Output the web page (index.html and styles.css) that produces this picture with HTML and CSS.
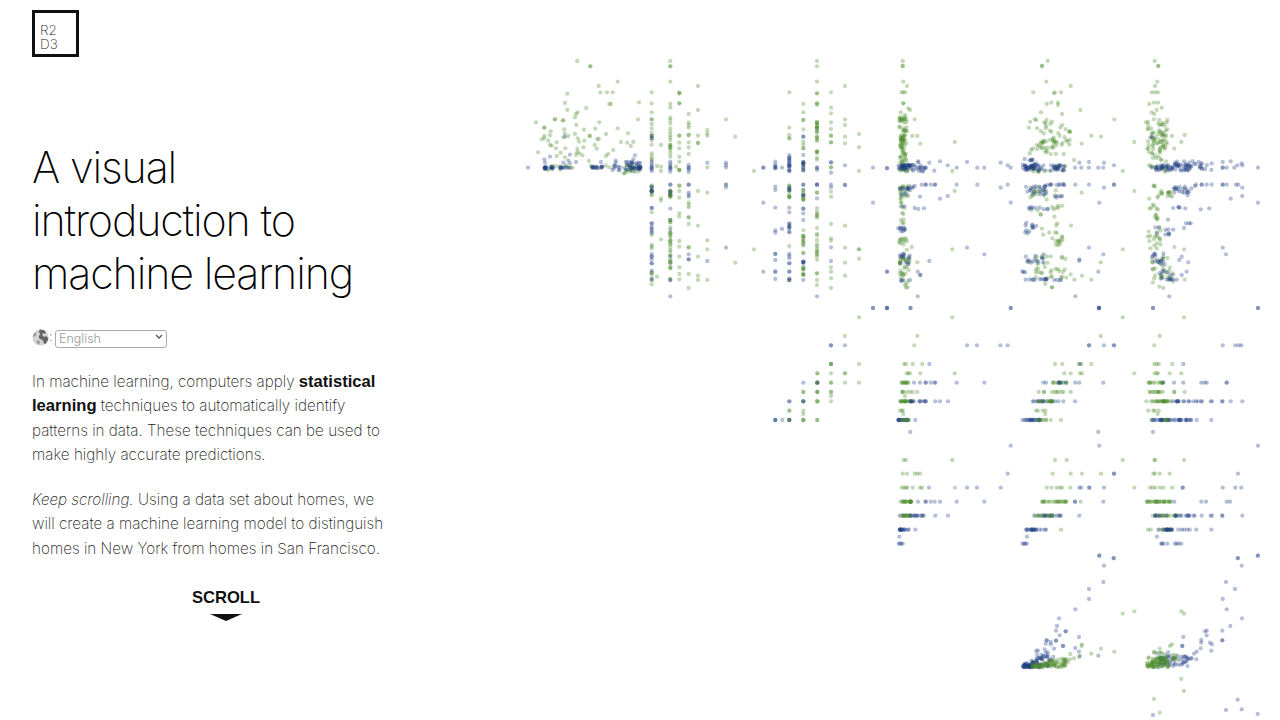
FILE: index.html
```html
<!DOCTYPE html>
<html lang="en">
<head>
    <meta charset="UTF-8">
    <meta name="viewport" content="width=device-width, initial-scale=1.0">
    <title>A visual introduction to machine learning</title>
    <link rel="stylesheet" href="styles.css">
</head>
<body>
    <div class="page">
        <div class="intro">
            <a class="logo" href="#">R2<br>D3</a>
            <h1>A visual<br>introduction to<br>machine learning</h1>
            <div class="lang">
                <svg class="globe" viewBox="0 0 16 16" width="17" height="17">
                    <circle cx="8" cy="8" r="7.6" fill="#d4d4d4"/>
                    <path d="M7 .6C9 .3 11.5 1 13 2.6L12.4 4.4 10.4 4 9.6 5.6 11 7.2 13.4 6.8 15.4 8.4C15.2 10.6 14 12.6 12.4 14L11 13.4 10.4 10.8 8.4 9.6 6.6 8.8 6.4 6.6 8 5 6.6 3.2Z" fill="#666"/>
                    <path d="M1.6 4.6 3.4 3.4 4.2 5.2 2.6 7.2 1 7Z" fill="#999"/>
                    <path d="M5 10.4 7.4 11.4 7 14 5.6 14.6 4.6 12.4Z" fill="#999"/>
                </svg>
                <span class="colon">:</span>
                <div class="select-wrap">
                    <select class="lang-select">
                        <option>English</option>
                    </select>
                    <svg class="chevron" viewBox="0 0 8 5" width="8" height="5">
                        <path d="M1 1 4 4 7 1" fill="none" stroke="#555" stroke-width="1.3"/>
                    </svg>
                </div>
            </div>
            <p>In machine learning, computers apply <b>statistical learning</b> techniques to automatically identify patterns in data. These techniques can be used to make highly accurate predictions.</p>
            <p><em>Keep scrolling.</em> Using a data set about homes, we will create a machine learning model to distinguish homes in New York from homes in San Francisco.</p>
            <div class="scroll">
                <span>SCROLL</span>
                <div class="arrow"></div>
            </div>
        </div>
        <svg id="matrix" class="matrix" viewBox="520 0 760 720"></svg>
    </div>
    <script src="script.js"></script>
</body>
</html>
```

FILE: styles.css
```css
html, body {
    margin: 0;
    padding: 0;
    height: 100%;
    background: #fff;
}
body {
    font-family: Inter, 'Liberation Sans', sans-serif;
    font-weight: 200;
    color: #333;
    overflow: hidden;
}
.page {
    display: flex;
    height: 720px;
}
.intro {
    flex: none;
    width: 354px;
    margin-right: 134px;
    padding: 10px 0 0 32px;
}
.logo {
    display: block;
    width: 36px;
    height: 30px;
    border: 3px solid #111;
    padding: 11px 0 0 5px;
    font-size: 13.5px;
    line-height: 13.5px;
    color: #222;
    text-decoration: none;
}
h1 {
    font-size: 43px;
    font-weight: 200;
    line-height: 53px;
    letter-spacing: -1.15px;
    color: #000;
    margin: 84px 0 27px;
}
.lang {
    display: flex;
    align-items: center;
    height: 18px;
    margin-bottom: 25px;
}
.globe {
    flex: none;
    margin-top: 2px;
}
.colon {
    width: 6px;
    font-size: 13px;
    font-weight: 300;
    color: #666;
}
.select-wrap {
    position: relative;
    width: 112px;
    height: 18px;
}
.lang-select {
    appearance: none;
    width: 100%;
    height: 100%;
    border: 1px solid #aaa;
    border-radius: 3px;
    background: #fff;
    padding: 0 0 0 3px;
    font-family: Inter, 'Liberation Sans', sans-serif;
    font-weight: 300;
    font-size: 12.5px;
    color: #999;
}
.chevron {
    position: absolute;
    right: 4px;
    top: 7px;
}
p {
    font-size: 15.25px;
    line-height: 24.3px;
    color: #222;
    margin: 0 0 21px;
}
b {
    font-family: 'Liberation Sans', sans-serif;
    font-weight: 700;
    font-size: 16.6px;
    line-height: 20px;
    color: #111;
}
.scroll {
    display: flex;
    flex-direction: column;
    align-items: center;
    width: 388px;
    margin-top: 27px;
}
.scroll span {
    font-family: 'Liberation Sans', sans-serif;
    font-weight: 700;
    font-size: 16.6px;
    line-height: 20px;
    color: #111;
}
.arrow {
    width: 0;
    height: 0;
    margin-top: 6px;
    border-left: 16px solid transparent;
    border-right: 16px solid transparent;
    border-top: 7px solid #111;
}
.matrix {
    display: block;
    flex: none;
    width: 760px;
    height: 720px;
}
```

FILE: script.js
```js
// scatterplot matrix, coordinates are written relative to a panel origin at 3x scale
const svg = document.getElementById('matrix');
const NS = 'http://www.w3.org/2000/svg';
const GREEN = '#4c8c2b';
const BLUE = '#1f3d84';

let seed = 42;
function rnd() {
    seed = (seed * 16807) % 2147483647;
    return seed / 2147483647;
}

function dot(color, x, y) {
    const c = document.createElementNS(NS, 'circle');
    c.setAttribute('cx', x.toFixed(1));
    c.setAttribute('cy', y.toFixed(1));
    c.setAttribute('r', 2.15);
    c.setAttribute('fill', color);
    c.setAttribute('fill-opacity', 0.33);
    svg.appendChild(c);
}

let ox = 0, oy = 0;
function origin(x, y) { ox = x; oy = y; }

// flat list of x,y pairs
function pts(color, list) {
    for (let i = 0; i < list.length; i += 2) {
        dot(color, ox + list[i] / 3, oy + list[i + 1] / 3);
    }
}
// one column, many y values
function col(color, x, ys) {
    ys.forEach(y => dot(color, ox + x / 3, oy + y / 3));
}
// one row, many x values
function row(color, y, xs) {
    xs.forEach(x => dot(color, ox + x / 3, oy + y / 3));
}
// random fill of a box
function box(color, x0, x1, y0, y1, n) {
    for (let i = 0; i < n; i++) {
        dot(color, ox + (x0 + rnd() * (x1 - x0)) / 3, oy + (y0 + rnd() * (y1 - y0)) / 3);
    }
}
// random fill of a thin wedge that widens to the right, for the bottom row
function wedge(color, x0, x1, yBase, rise, n) {
    for (let i = 0; i < n; i++) {
        const t = rnd();
        dot(color, ox + (x0 + t * (x1 - x0)) / 3, oy + (yBase - rnd() * rise * (0.25 + t)) / 3);
    }
}
// random column band
function vband(color, x, y0, y1, n) { box(color, x, x, y0, y1, n); }
// random row band
function hband(color, y, x0, x1, n) { box(color, x0, x1, y, y, n); }

/* ---- top row ---- */
origin(520, 50);

// panel 1
pts(GREEN, [172,33, 211,49, 211,49, 236,108, 293,95, 241,127, 261,127, 278,127, 142,131, 135,159, 268,162, 273,162, 357,157,
    199,174, 173,187, 168,192, 142,180, 165,202, 48,217, 105,208, 105,208, 129,211, 129,211, 73,233, 73,233, 92,244, 133,238, 169,225,
    192,239, 226,236, 238,217, 293,235, 354,208, 65,268, 73,258, 73,265, 90,256, 110,277, 145,258, 165,252, 173,265, 177,275,
    193,272, 190,292, 209,258, 209,258, 232,267, 236,267, 258,252, 303,276, 322,278, 324,250, 340,276, 332,288, 280,300, 265,312, 258,318,
    230,296, 224,285, 90,285, 95,287, 108,295, 122,308, 136,295, 54,307, 110,318, 135,322, 172,297, 172,307, 168,315, 178,310, 187,316, 207,333,
    85,272, 130,262, 134,250]);
box(GREEN, 75, 160, 345, 362, 12);
box(GREEN, 310, 360, 345, 370, 22);
box(GREEN, 210, 300, 345, 362, 5);
pts(BLUE, [24,353, 73,328, 75,338, 90,320, 150,314, 130,338, 145,332, 150,340, 168,336, 243,336, 287,332, 287,338, 318,336, 345,316, 340,328, 135,260]);
box(BLUE, 68, 78, 349, 358, 9);
box(BLUE, 92, 102, 349, 358, 7);
hband(BLUE, 353, 118, 155, 10);
box(BLUE, 212, 232, 349, 357, 10);
box(BLUE, 240, 255, 346, 358, 5);
box(BLUE, 272, 300, 346, 362, 8);
box(BLUE, 310, 362, 335, 365, 28);
box(BLUE, 352, 362, 346, 358, 8);

// panel 2
col(GREEN, 395, [127,160,187,208,208,222,235,248,258,258,264,270,284,310,318,326,330]);
col(BLUE, 395, [335,342,348,353,353,358,363,258,265]);
vband(GREEN, 395, 405, 440, 9);
vband(BLUE, 395, 405, 425, 5);
col(BLUE, 395, [474,474,520,520,530,535,540,545,550,612,620,620,628,640,640,662,668,685,690]);
col(GREEN, 395, [487,555,585,590,595,668,674,690,703]);
col(GREEN, 451, [33,49,49,95,162,173,203,210,220,235,245,255,262,270,285,285,290,290,295,300,310,320]);
col(BLUE, 451, [335,342,348,353,353,358,365,404,404,476,510,540,620,640,690,690,739]);
vband(BLUE, 451, 415, 440, 7);
vband(GREEN, 451, 410, 450, 6);
vband(GREEN, 451, 490, 700, 28);
col(GREEN, 478, [127,130,130,160,160,257,257,278,295,320,335,360,360,360,407,407,423,443,490,500,573,590,620,652,672,688]);
col(GREEN, 506, [192,218,225,233,255,255,277,292,312,458,465,472,502,502,522,592,592,672,714]);
col(BLUE, 506, [345,353,353,358,366,404,404,428,435,440,613,628,628]);
col(GREEN, 534, [108,180,257,279,279,423,527,620,677,690]);
col(GREEN, 562, [240,250,257,352,428,571,598,690]);
col(BLUE, 562, [338,633]);
col(GREEN, 618, [208,404]);
col(BLUE, 618, [338,345,352,404,412,593]);
col(GREEN, 646, [260,638]);
col(GREEN, 702, [363,598]);
pts(GREEN, [423,285, 411,348, 423,350, 423,363, 423,445, 423,452, 423,568, 411,680, 468,350]);

// panel 3
col(BLUE, 730, [353,353,458,665]);
col(BLUE, 766, [335,345,350,350,355,355,410,420,473,541,548,612,612,630,665,665,687]);
pts(BLUE, [786,353, 786,537]);
col(GREEN, 808, [127,233,255,265,265,588,690]);
vband(BLUE, 808, 315, 365, 16);
col(BLUE, 808, [473,487,612,618,625,640,640,665,665,685,690,690]);
vband(GREEN, 808, 405, 450, 10);
vband(BLUE, 808, 405, 430, 4);
vband(BLUE, 808, 520, 550, 8);
col(GREEN, 850, [162,187,210,210,238,275,285,295,295,345,360]);
col(BLUE, 850, [260,260,315,404,404,476,476,490,510,690]);
vband(BLUE, 850, 335, 365, 10);
vband(BLUE, 850, 415, 440, 5);
vband(GREEN, 850, 415, 450, 6);
vband(GREEN, 850, 530, 620, 13);
vband(BLUE, 850, 620, 640, 5);
vband(GREEN, 850, 650, 680, 9);
col(GREEN, 891, [33,49,95,130,130,160,160,165,670,670,690,705,428,428]);
vband(GREEN, 891, 205, 345, 24);
col(BLUE, 891, [353,353,360,404,404,404,445,739]);
vband(GREEN, 891, 470, 505, 6);
vband(GREEN, 891, 530, 630, 13);
col(GREEN, 933, [127,173,190,217,237,257,257,277,277,352,352,425,440,522,565,572,652,665,685,714]);
col(BLUE, 933, [337,337,368,404,412,592,633]);
col(GREEN, 975, [108,208,225,260,280,527,593,638,677]);
col(BLUE, 975, [346,405,405]);
col(GREEN, 1017, [252,292,363,598,598,626]);
col(BLUE, 1059, [353,458,774]);
col(BLUE, 1101, [355,665,774]);

origin(880, 50);

// panel 4
pts(GREEN, [68,33, 68,48, 68,48, 70,95, 81,108, 65,127, 76,127, 70,127, 70,160, 70,160, 85,175, 90,180, 62,187, 75,195, 104,208, 224,276, 121,281, 217,363, 224,423, 217,598, 65,210, 65,210, 97,258, 112,258, 95,591, 112,637]);
box(GREEN, 58, 80, 200, 330, 50);
box(GREEN, 60, 75, 250, 300, 18);
box(GREEN, 55, 90, 330, 366, 22);
box(GREEN, 58, 90, 405, 440, 18);
box(GREEN, 62, 74, 440, 520, 12);
box(GREEN, 58, 82, 560, 600, 12);
box(GREEN, 58, 92, 620, 695, 30);
box(GREEN, 72, 84, 700, 716, 4);
box(BLUE, 54, 98, 344, 360, 32);
box(BLUE, 98, 140, 334, 366, 14);
hband(BLUE, 353, 118, 140, 5);
pts(BLUE, [21,354, 180,334, 203,346, 230,353, 261,336, 292,353, 313,353, 362,338, 383,346, 392,353, 163,362, 148,338, 125,404, 137,404, 137,404, 152,404, 165,404, 165,404, 104,408, 230,404, 292,404, 362,413, 383,404, 180,446, 203,438, 392,458, 120,440, 104,474, 115,477, 132,475, 148,633, 261,593, 313,613, 21,665, 113,665, 121,675, 121,675, 90,690, 113,739, 21,774, 92,774]);
box(BLUE, 60, 100, 410, 435, 14);
box(BLUE, 55, 75, 530, 552, 10);
box(BLUE, 58, 90, 610, 642, 14);
box(BLUE, 62, 72, 688, 692, 3);
box(BLUE, 64, 76, 465, 480, 2);

// panel 5
pts(GREEN, [503,33, 486,48, 486,48, 499,95, 572,108, 460,127, 522,130, 524,127, 543,127, 534,158, 534,165, 514,158, 500,162, 601,180, 483,187, 546,192, 464,208, 469,210, 500,210, 516,215, 703,208, 447,233, 634,257, 663,260, 763,276, 605,281, 582,330, 728,363, 605,428, 763,423, 573,527, 728,598, 662,637, 634,689, 606,677, 583,689, 572,673, 516,712, 516,712, 496,702]);
box(GREEN, 445, 570, 215, 320, 48);
box(GREEN, 460, 530, 270, 300, 14);
box(GREEN, 445, 560, 345, 368, 14);
box(GREEN, 450, 500, 410, 450, 14);
box(GREEN, 515, 550, 420, 520, 10);
box(GREEN, 450, 490, 475, 495, 4);
box(GREEN, 485, 550, 520, 600, 18);
box(GREEN, 450, 560, 615, 690, 34);
pts(BLUE, [585,353, 598,338, 604,353, 627,336, 627,353, 655,353, 670,353, 672,338, 702,346, 586,404, 627,404, 672,413, 702,404, 702,404, 658,458, 627,593, 670,613, 598,628, 598,633, 655,665, 586,739, 657,774, 657,774, 392,774]);
box(BLUE, 428, 555, 345, 362, 48);
box(BLUE, 428, 470, 325, 345, 10);
box(BLUE, 428, 470, 346, 356, 14);
box(BLUE, 495, 560, 402, 406, 10);
box(BLUE, 436, 500, 408, 436, 22);
box(BLUE, 520, 550, 435, 445, 5);
box(BLUE, 436, 510, 472, 478, 9);
box(BLUE, 432, 470, 518, 550, 12);
box(BLUE, 434, 495, 610, 642, 14);
box(BLUE, 426, 440, 663, 667, 3);
box(BLUE, 426, 500, 686, 690, 12);
box(BLUE, 520, 550, 688, 692, 4);

// panel 6
pts(GREEN, [824,33, 835,48, 835,48, 832,95, 825,108, 815,127, 825,127, 834,127, 808,162, 822,158, 834,158, 845,173, 830,180, 815,187, 823,192, 798,217, 822,208, 838,210, 862,210, 876,258, 914,255, 904,276, 883,296, 838,710, 850,714, 883,591, 912,598, 914,689]);
box(GREEN, 802, 865, 215, 340, 58);
box(GREEN, 815, 850, 245, 295, 14);
box(GREEN, 805, 870, 345, 368, 14);
box(GREEN, 820, 830, 405, 410, 3);
box(GREEN, 830, 880, 415, 440, 13);
box(GREEN, 805, 835, 440, 515, 14);
box(GREEN, 800, 845, 520, 600, 18);
box(GREEN, 810, 880, 620, 700, 30);
pts(BLUE, [1134,353, 1028,336, 1052,334, 1085,340, 1087,346, 1072,346, 1063,353, 1028,353, 1028,353, 1040,353, 965,404, 965,404, 980,404, 995,404, 1028,404, 1028,404, 1040,404, 1068,404, 1075,404, 1087,413, 1087,438, 1052,446, 1134,458, 962,478, 988,475, 945,408, 948,404, 1028,593, 1038,613, 868,739, 819,774, 1134,774, 927,520, 932,520, 918,520, 912,534, 864,509, 916,475, 905,620, 898,630, 925,637, 920,665, 905,675, 890,689, 880,689]);
box(BLUE, 815, 935, 345, 362, 55);
box(BLUE, 880, 960, 332, 345, 12);
box(BLUE, 950, 995, 335, 362, 12);
box(BLUE, 880, 935, 410, 436, 20);
box(BLUE, 875, 900, 470, 478, 4);
box(BLUE, 825, 880, 530, 555, 10);
box(BLUE, 815, 860, 610, 645, 16);
box(BLUE, 830, 880, 660, 690, 10);
pts(BLUE, [860,689, 866,689, 870,689, 815,260, 815,262]);

/* ---- second block ---- */
origin(760, 300);

pts(BLUE, [339,24, 381,24, 451,24, 752,24, 1017,24, 1017,24, 1179,24, 1494,24]);
pts(GREEN, [297,52, 577,52, 1088,52, 1272,52, 255,108, 472,108, 1022,108, 1199,108, 463,136, 1183,136]);
pts(BLUE, [213,136, 213,136, 255,136, 621,136, 651,136, 721,136, 743,136, 987,136, 987,136, 1032,136, 1062,136, 1062,136, 1388,136, 1426,136, 1436,136, 1444,136]);

// triangle panel
pts(BLUE, [46,360, 46,360, 46,360, 67,360, 88,360, 88,360, 88,360, 88,304, 88,304, 130,304, 130,304, 130,304, 130,248, 172,248, 172,248, 172,248, 213,192]);
pts(GREEN, [88,360, 130,360, 130,360, 130,360, 172,360, 172,360, 88,332, 88,332, 130,332, 130,342, 130,304, 172,304, 172,304, 172,304, 213,304, 213,288, 130,276, 130,276, 172,276, 172,276, 172,276, 213,276, 213,276, 172,248, 172,248, 213,248, 213,248, 255,248, 297,248, 172,220, 172,220, 213,220, 255,220, 255,220, 213,192, 213,192, 297,192]);

// rows of the first column
row(GREEN, 192, [432,438,458,487]);
row(BLUE, 192, [508]);
row(GREEN, 220, [440,445,450,481,584]);
hband(GREEN, 248, 424, 446, 10);
row(BLUE, 248, [462,480,497,497,512,524,526,590,673]);
row(GREEN, 276, [426,428,430,440,450,458,472]);
hband(GREEN, 304, 420, 455, 18);
hband(BLUE, 304, 450, 500, 12);
row(BLUE, 304, [526,540,564]);
pts(GREEN, [435,288, 420,332, 426,332, 428,332, 430,342]);
hband(BLUE, 360, 414, 448, 16);
hband(GREEN, 360, 420, 448, 6);
pts(BLUE, [466,360, 451,396]);

// rows of the second column
row(GREEN, 192, [885,907]);
pts(GREEN, [956,192, 964,192, 994,192, 913,220, 932,220, 960,220, 966,220, 1123,220]);
pts(BLUE, [960,192]);
row(BLUE, 248, [850,858,946,958,1030]);
hband(GREEN, 248, 870, 925, 10);
hband(BLUE, 248, 885, 920, 5);
row(GREEN, 276, [836,852,852,876,884,890,894,904,910,932]);
hband(BLUE, 304, 815, 885, 14);
hband(GREEN, 304, 825, 885, 12);
row(BLUE, 304, [895,910,945]);
row(GREEN, 332, [828,834,848,856]);
pts(GREEN, [856,342]);
hband(BLUE, 360, 786, 840, 20);
hband(GREEN, 360, 815, 860, 6);
pts(GREEN, [872,360, 903,360]);
pts(BLUE, [1015,396]);

// rows of the third column
row(GREEN, 192, [1183,1190,1196,1237]);
pts(BLUE, [1270,192]);
row(GREEN, 220, [1184,1190,1194,1229,1264]);
hband(GREEN, 248, 1163, 1212, 12);
row(BLUE, 248, [1210,1242,1270,1324,1334,1340,1400,1400]);
hband(GREEN, 276, 1168, 1210, 10);
pts(GREEN, [1243,276, 1243,276, 1274,276]);
pts(GREEN, [1159,304]);
hband(GREEN, 304, 1172, 1235, 22);
hband(BLUE, 304, 1235, 1330, 16);
row(BLUE, 304, [1352,1356,1387,1387,1412,1447]);
row(GREEN, 332, [1165,1180,1184,1196]);
pts(GREEN, [1193,342]);
hband(GREEN, 360, 1170, 1240, 12);
hband(BLUE, 360, 1172, 1295, 30);
row(BLUE, 360, [1310,1354]);
pts(BLUE, [1179,396]);

// third row of the block
pts(BLUE, [752,437, 1018,437, 1494,437]);
row(GREEN, 480, [431,438,577,885,920,1088,1184,1184,1272]);
row(GREEN, 521, [428,441,464,472,480,878,932,966,1023,1180,1185,1199,1229]);
row(BLUE, 521, [743,1062,1062,1434]);
row(GREEN, 563, [425,432,438,442,458,480,486,585,860,874,890,900,906,931,1123,1170,1178,1186,1200,1210,1237]);
row(BLUE, 563, [507,621,651,722,958,964,988,988,1032,1268,1268,1388,1426,1444]);
hband(GREEN, 605, 420, 460, 18);
row(BLUE, 605, [474,497,497,512,524,540,590,673,945,945,1030,1243,1324,1338,1400,1410]);
hband(GREEN, 605, 845, 920, 20);
pts(GREEN, [962,605]);
hband(GREEN, 605, 1160, 1235, 26);
hband(BLUE, 647, 415, 495, 18);
hband(GREEN, 647, 420, 455, 10);
row(BLUE, 647, [526,564,958,1447,1387,1387,1325,1352,1356]);
hband(BLUE, 647, 808, 905, 18);
hband(GREEN, 647, 815, 880, 10);
hband(GREEN, 647, 1175, 1270, 18);
hband(BLUE, 647, 1180, 1305, 18);
hband(BLUE, 689, 416, 448, 14);
pts(BLUE, [466,689, 418,710, 801,710, 1191,710]);
hband(BLUE, 689, 795, 838, 16);
row(BLUE, 689, [845,855,858]);
pts(GREEN, [903,689, 1164,689, 1172,689]);
hband(GREEN, 689, 1190, 1240, 8);
hband(BLUE, 689, 1188, 1240, 14);
row(BLUE, 689, [1255,1265,1272,1282,1289,1309,1354]);
row(BLUE, 731, [416,420,424,428,788,792,796,800,1204,1206,1210,1222,1245,1250,1256]);
pts(BLUE, [1264,731, 1018,767, 1061,774, 1434,774, 1494,767]);

/* ---- bottom row ---- */
origin(1000, 540);

pts(BLUE, [298,47, 341,55, 312,77, 310,126, 267,147, 267,177, 226,208, 177,235, 171,258, 197,274, 197,274, 168,272, 179,286, 237,291, 140,301, 140,301, 137,311, 152,306, 152,313, 168,302, 168,302, 188,318, 190,318, 162,326, 114,332, 134,328, 226,324, 237,335, 295,347, 238,350, 143,337]);
wedge(BLUE, 66, 150, 382, 34, 70);
box(BLUE, 66, 100, 374, 382, 16);
box(BLUE, 105, 160, 330, 362, 8);
pts(GREEN, [368,221, 403,214, 245,313, 245,318, 303,326, 343,335, 274,341, 211,342, 222,355, 240,348, 210,358, 204,367]);
wedge(GREEN, 92, 200, 382, 26, 75);

pts(BLUE, [713,55, 773,47, 725,77, 678,126, 705,147, 668,177, 680,208, 726,235, 691,258, 667,272, 667,301, 667,301, 615,274, 620,272, 620,286, 604,300, 604,308, 550,291, 630,308, 636,313, 547,318, 547,318, 634,332, 602,325, 590,335, 582,341, 563,355, 589,358]);
box(BLUE, 480, 575, 345, 382, 42);
box(BLUE, 455, 510, 335, 382, 10);
pts(GREEN, [544,214, 552,221, 516,313, 510,318, 479,326, 462,335, 520,345, 524,353, 544,417, 552,453, 462,477, 479,518]);
box(GREEN, 440, 505, 352, 382, 70);
box(GREEN, 460, 500, 335, 360, 10);
box(GREEN, 515, 535, 340, 365, 6);
pts(BLUE, [713,479, 725,508, 678,510, 773,522, 459,525]);
```
